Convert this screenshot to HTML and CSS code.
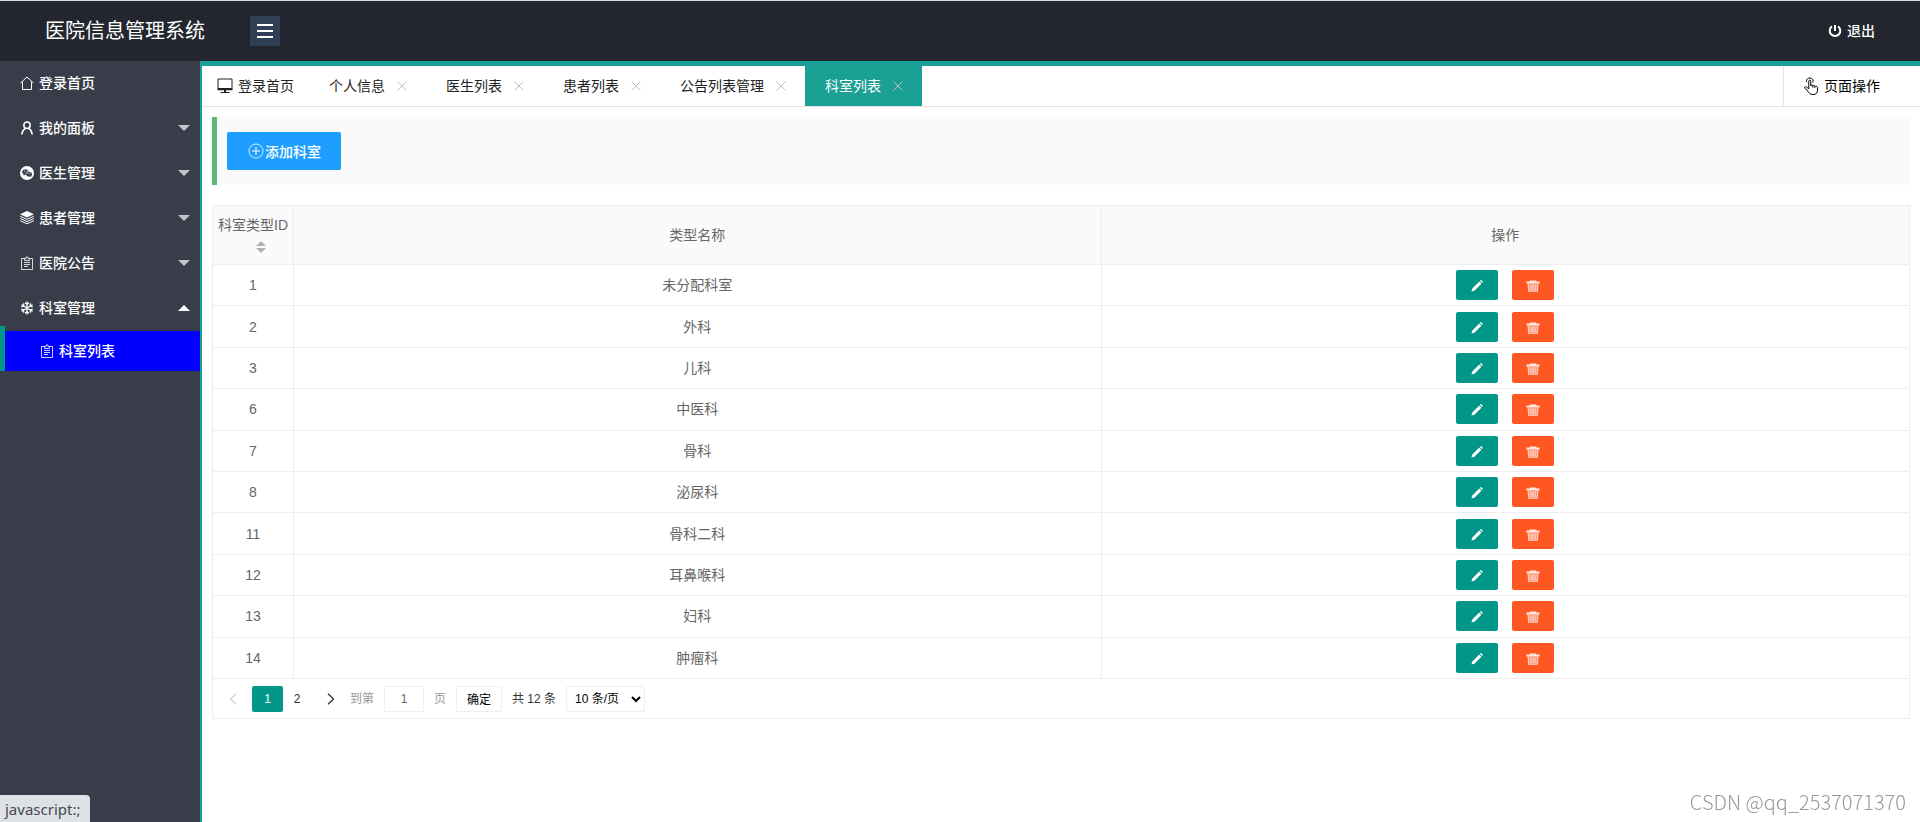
FILE: index.html
```html
<!DOCTYPE html>
<html lang="zh-CN">
<head>
<meta charset="utf-8">
<title>医院信息管理系统</title>
<link rel="stylesheet" href="styles.css">
</head>
<body>
<svg class="sprite" aria-hidden="true">
  <symbol id="i-close" viewBox="0 0 10 10"><path d="M.5.5l9 9M9.500.5l-9 9" fill="none" stroke="currentColor"/></symbol>
  <symbol id="i-note" viewBox="0 0 14 14"><path d="M4.500 2.500h-3v11h11v-11h-3M4.500 4.500v-2h1.500v-1.500h2v1.500h1.500v2zM4 6.500h6M4 8.500h6M4 10.500h4" fill="none" stroke="currentColor" stroke-width=".8"/></symbol>
  <symbol id="i-edit" viewBox="0 0 12 12"><path d="M.4 11.600l.9-3L8.300 1.600l2.100 2.100-7 7zM8.900 1l.4-.4c.5-.5.900-.5 1.400 0l.7.7c.5.500.5.900 0 1.400l-.4.400z" fill="currentColor"/></symbol>
  <symbol id="i-trash" viewBox="0 0 14 12"><path d="M4 .4h6l.5 1H13.600v2.100H.4V1.400h3.100z" fill="currentColor" opacity=".85"/><path d="M1.600 3.500h10.800l-.7 8.100H2.300z" fill="currentColor" opacity=".4"/><path d="M2.200 3.500l.3 7.800h9l.3-7.800M4.900 4.500v5.500M7 4.500v5.500M9.100 4.500v5.500" fill="none" stroke="currentColor" stroke-width=".8" opacity=".8"/></symbol>
</svg>

<header class="header">
  <h1 class="logo">医院信息管理系统</h1>
  <button class="toggle" type="button" aria-label="切换菜单">
    <svg width="18" height="16" viewBox="0 0 18 16"><path d="M1 2h16M1 8h16M1 14h16" stroke="#fff" stroke-width="2"/></svg>
  </button>
  <a class="logout" href="#">
    <svg width="14" height="14" viewBox="0 0 14 14"><path d="M4 2.400a5.300 5.300 0 1 0 6 0M7 1v6" fill="none" stroke="currentColor" stroke-width="2"/></svg>
    <span>退出</span>
  </a>
</header>

<div class="shell">
  <nav class="side">
    <a class="nav" href="#"><svg class="ico" viewBox="0 0 14 14"><path d="M.5 7L7 1l6.500 6M2.500 5.500v8h9v-8" fill="none" stroke="currentColor"/></svg><span>登录首页</span></a>
    <a class="nav" href="#"><svg class="ico" viewBox="0 0 14 14"><circle cx="7" cy="4.200" r="3.200" fill="none" stroke="currentColor" stroke-width="1.500"/><path d="M1.800 13.500c.2-3 1.600-5 3.500-6.200M12.200 13.500c-.2-3-1.600-5-3.500-6.200" fill="none" stroke="currentColor" stroke-width="1.500"/></svg><span>我的面板</span><i class="caret"></i></a>
    <a class="nav" href="#"><svg class="ico" viewBox="0 0 14 14"><circle cx="7" cy="7" r="7" fill="#fff"/><path d="M2.200 6C2.200 4.200 3.800 3.200 5.500 3.200S8.600 4.200 8.800 5.500C6.800 5.600 5.400 6.900 5.700 8.700L3.300 9.400l.3-1.200C2.700 7.700 2.200 7 2.200 6z" fill="#393d49"/><ellipse cx="9.100" cy="8.200" rx="2.900" ry="2.300" fill="#393d49"/><path d="M9.500 10l1.700 1-.2-1.500z" fill="#393d49"/><path d="M4 5h1M6.500 5h1M7.700 7.700h.8M9.800 7.700h.8" stroke="#fff" stroke-width=".8"/></svg><span>医生管理</span><i class="caret"></i></a>
    <a class="nav" href="#"><svg class="ico" viewBox="0 0 14 14"><path d="M7 0l7 3.300-7 3.200L0 3.300z" fill="currentColor"/><path d="M.2 5.300L7 8.400l6.800-3.100M.2 7.500L7 10.600l6.800-3.100M.2 9.700L7 12.800l6.800-3.100" fill="none" stroke="currentColor"/></svg><span>患者管理</span><i class="caret"></i></a>
    <a class="nav" href="#"><svg class="ico"><use href="#i-note"/></svg><span>医院公告</span><i class="caret"></i></a>
    <a class="nav" href="#"><svg class="ico" viewBox="0 0 14 14"><path d="M7 .5v13M1.400 3.800l11.200 6.400M1.400 10.200l11.200-6.400M5 1.800l2 1.700 2-1.700M5 12.200l2-1.700 2 1.700M1.300 6l2.600-.9-.5-2.700M12.700 6l-2.600-.9.5-2.700M1.300 8l2.600.9-.5 2.700M12.700 8l-2.600.9.500 2.700" fill="none" stroke="currentColor" stroke-width="1.300"/></svg><span>科室管理</span><i class="caret up"></i></a>
    <a class="nav sub" href="#"><svg class="ico"><use href="#i-note"/></svg><span>科室列表</span></a>
  </nav>

  <main class="main">
    <div class="tabs">
      <a class="tab home" href="#"><svg width="16" height="16" viewBox="0 0 16 16"><path d="M1 1h14v9.500H1z" fill="none" stroke="currentColor" stroke-linejoin="round"/><path d="M.5 10h15v2.200H.5zM7 12h2v2H7z" fill="currentColor"/><path d="M3.500 14.500h9" stroke="currentColor"/></svg><span>登录首页</span></a>
      <a class="tab" href="#"><span>个人信息</span><svg class="x"><use href="#i-close"/></svg></a>
      <a class="tab" href="#"><span>医生列表</span><svg class="x"><use href="#i-close"/></svg></a>
      <a class="tab" href="#"><span>患者列表</span><svg class="x"><use href="#i-close"/></svg></a>
      <a class="tab" href="#"><span>公告列表管理</span><svg class="x"><use href="#i-close"/></svg></a>
      <a class="tab on" href="#"><span>科室列表</span><svg class="x"><use href="#i-close"/></svg></a>
      <a class="ops" href="#"><svg width="15" height="18" viewBox="0 0 15 18"><path d="M4.800 11.800V4.200c0-1.500 2-1.500 2 0v4.600M6.800 8.500c.2-1 2-.9 2 .2v1.900M8.800 9c.3-.9 2-.8 2 .4v1.400M10.800 9.800c.4-.8 2.700-.6 2.700.7v2.500c0 2.800-1.200 4.500-4.500 4.500-3 0-3.800-1.300-5-3.200L1 11.400c-1-1.500.7-2.300 1.800-1.100l2 1.600" fill="none" stroke="currentColor"/><path d="M2.800 5.300C1.800 3.200 3.300 1 5.800 1s4 2.200 3 4.300" fill="none" stroke="currentColor"/></svg><span>页面操作</span></a>
    </div>

    <div class="content">
      <div class="toolbar">
        <button class="add" type="button"><svg width="16" height="16" viewBox="0 0 16 16"><circle cx="8" cy="8" r="7" fill="none" stroke="currentColor" stroke-width=".8"/><path d="M8 4v8M4 8h8" stroke="currentColor"/></svg><span>添加科室</span></button>
      </div>

      <div class="grid">
        <table class="table">
          <colgroup><col class="c-id"><col><col></colgroup>
          <thead>
            <tr><th scope="col">科室类型ID<span class="sort"><i class="asc"></i><i class="desc"></i></span></th><th scope="col">类型名称</th><th scope="col">操作</th></tr>
          </thead>
          <tbody>
            <tr><td>1</td><td>未分配科室</td><td><div class="acts"><button class="btn" type="button" aria-label="编辑"><svg width="12" height="12"><use href="#i-edit"/></svg></button><button class="btn del" type="button" aria-label="删除"><svg width="14" height="12"><use href="#i-trash"/></svg></button></div></td></tr>
            <tr><td>2</td><td>外科</td><td><div class="acts"><button class="btn" type="button" aria-label="编辑"><svg width="12" height="12"><use href="#i-edit"/></svg></button><button class="btn del" type="button" aria-label="删除"><svg width="14" height="12"><use href="#i-trash"/></svg></button></div></td></tr>
            <tr><td>3</td><td>儿科</td><td><div class="acts"><button class="btn" type="button" aria-label="编辑"><svg width="12" height="12"><use href="#i-edit"/></svg></button><button class="btn del" type="button" aria-label="删除"><svg width="14" height="12"><use href="#i-trash"/></svg></button></div></td></tr>
            <tr><td>6</td><td>中医科</td><td><div class="acts"><button class="btn" type="button" aria-label="编辑"><svg width="12" height="12"><use href="#i-edit"/></svg></button><button class="btn del" type="button" aria-label="删除"><svg width="14" height="12"><use href="#i-trash"/></svg></button></div></td></tr>
            <tr><td>7</td><td>骨科</td><td><div class="acts"><button class="btn" type="button" aria-label="编辑"><svg width="12" height="12"><use href="#i-edit"/></svg></button><button class="btn del" type="button" aria-label="删除"><svg width="14" height="12"><use href="#i-trash"/></svg></button></div></td></tr>
            <tr><td>8</td><td>泌尿科</td><td><div class="acts"><button class="btn" type="button" aria-label="编辑"><svg width="12" height="12"><use href="#i-edit"/></svg></button><button class="btn del" type="button" aria-label="删除"><svg width="14" height="12"><use href="#i-trash"/></svg></button></div></td></tr>
            <tr><td>11</td><td>骨科二科</td><td><div class="acts"><button class="btn" type="button" aria-label="编辑"><svg width="12" height="12"><use href="#i-edit"/></svg></button><button class="btn del" type="button" aria-label="删除"><svg width="14" height="12"><use href="#i-trash"/></svg></button></div></td></tr>
            <tr><td>12</td><td>耳鼻喉科</td><td><div class="acts"><button class="btn" type="button" aria-label="编辑"><svg width="12" height="12"><use href="#i-edit"/></svg></button><button class="btn del" type="button" aria-label="删除"><svg width="14" height="12"><use href="#i-trash"/></svg></button></div></td></tr>
            <tr><td>13</td><td>妇科</td><td><div class="acts"><button class="btn" type="button" aria-label="编辑"><svg width="12" height="12"><use href="#i-edit"/></svg></button><button class="btn del" type="button" aria-label="删除"><svg width="14" height="12"><use href="#i-trash"/></svg></button></div></td></tr>
            <tr><td>14</td><td>肿瘤科</td><td><div class="acts"><button class="btn" type="button" aria-label="编辑"><svg width="12" height="12"><use href="#i-edit"/></svg></button><button class="btn del" type="button" aria-label="删除"><svg width="14" height="12"><use href="#i-trash"/></svg></button></div></td></tr>
          </tbody>
        </table>

        <div class="pager">
          <button class="pg prev" type="button" aria-label="上一页" disabled><svg width="8" height="12" viewBox="0 0 8 12"><path d="M7 .7L1.500 6 7 11.300" fill="none" stroke="currentColor" stroke-width="1.300"/></svg></button>
          <button class="pg cur" type="button">1</button>
          <button class="pg two" type="button">2</button>
          <button class="pg next" type="button" aria-label="下一页"><svg width="8" height="12" viewBox="0 0 8 12"><path d="M1 .7L6.500 6 1 11.300" fill="none" stroke="currentColor" stroke-width="1.300"/></svg></button>
          <label class="skip">到第<input class="num" type="text" value="1">页</label>
          <button class="ok" type="button">确定</button>
          <span class="total">共 12 条</span>
          <select class="size" aria-label="每页条数"><option>10 条/页</option><option>20 条/页</option></select>
        </div>
      </div>
    </div>
  </main>
</div>

<div class="status">javascript:;</div>
<div class="mark">CSDN @qq_2537071370</div>
</body>
</html>
```
FILE: styles.css
```css
* { box-sizing: border-box; }
body {
  margin: 0;
  min-height: 100vh;
  display: flex;
  flex-direction: column;
  border-top: 1px solid #d5dddb;
  background: #fff;
  color: #333;
  font: 14px/24px "Liberation Sans", "Noto Sans CJK SC", sans-serif;
}
a { color: inherit; text-decoration: none; }
button, input, select { font-family: inherit; margin: 0; }
svg { flex: none; display: block; }
.sprite { display: none; }

.header {
  display: flex;
  align-items: center;
  height: 60px;
  padding: 0 45px;
  background: #23262e;
  color: #fff;
}
.logo { margin: 0; font-size: 20px; font-weight: 400; line-height: 28px; }
.toggle {
  display: flex;
  align-items: center;
  justify-content: center;
  width: 30px;
  height: 30px;
  margin-left: 45px;
  padding: 0;
  border: 0;
  background: #2f4056;
}
.logout { display: flex; align-items: center; gap: 5px; margin-left: auto; font-weight: 500; }

.shell { flex: 1; display: flex; }
.side { width: 200px; flex: none; background: #393d49; color: #fff; font-weight: 500; }
.nav {
  position: relative;
  display: flex;
  align-items: center;
  gap: 5px;
  height: 45px;
  padding: 0 10px 2px 20px;
}
.ico { width: 14px; height: 14px; }
.caret {
  margin-left: auto;
  border: 6px solid transparent;
  border-top-color: #c2c5c9;
  border-bottom-width: 0;
}
.caret.up { border-width: 0 6px 6px; border-bottom-color: #fff; }
.sub { height: 40px; padding: 0 10px 0 40px; background: #00f; }
.sub::before {
  content: "";
  position: absolute;
  left: 0;
  bottom: 0;
  width: 5px;
  height: 45px;
  background: #009688;
}

.main {
  flex: 1;
  min-width: 0;
  border-top: 5px solid #1aa094;
  border-left: 2px solid #1aa094;
}
.tabs { display: flex; height: 41px; border-bottom: 1px solid #e2e2e2; color: #222; }
.tab { display: flex; align-items: center; gap: 12px; padding: 0 19px 0 20px; }
.home { gap: 5px; padding: 0 15px; }
.x { width: 10px; height: 10px; color: #c2c2c2; }
.on { background: #1aa094; color: #fff; }
.ops {
  display: flex;
  align-items: center;
  gap: 5px;
  margin-left: auto;
  padding: 0 40px 0 20px;
  border-left: 1px solid #e2e2e2;
  color: #000;
}

.content { padding: 10px; }
.toolbar {
  padding: 15px 10px;
  border-left: 5px solid #5fb878;
  border-radius: 0 2px 2px 0;
  background: #fafafa;
}
.add {
  display: flex;
  align-items: center;
  gap: 1px;
  height: 38px;
  padding: 0 20px 0 21px;
  border: 0;
  border-radius: 2px;
  background: #1e9fff;
  color: #fff;
  font-size: 14px;
  font-weight: 500;
}
.grid { margin-top: 20px; border: 1px solid #eee; }
.table {
  width: 100%;
  height: 473px;
  border-collapse: separate;
  border-spacing: 0;
  table-layout: fixed;
  color: #666;
  text-align: center;
}
.c-id { width: 81px; }
.table th, .table td { padding: 0; border-right: 1px solid #eee; border-bottom: 1px solid #eee; }
.table th:last-child, .table td:last-child { border-right: 0; }
.table th { height: 59px; background: #fafafa; font-weight: 400; }
.sort { display: flex; flex-direction: column; gap: 2px; width: 10px; margin: 4px auto 4px 43px; }
.asc, .desc { border: 5px solid transparent; }
.asc { border-top: 0; border-bottom-color: #b2b2b2; }
.desc { border-bottom: 0; border-top-color: #b2b2b2; }
.acts { display: flex; justify-content: center; gap: 14px; }
.btn {
  display: flex;
  align-items: center;
  justify-content: center;
  width: 42px;
  height: 30px;
  padding: 2px 0 0;
  border: 0;
  border-radius: 2px;
  background: #009688;
  color: #fff;
}
.del { background: #ff5722; }

.pager {
  display: flex;
  align-items: center;
  height: 39px;
  padding-left: 8px;
  font-size: 12px;
  color: #333;
}
.pg {
  display: flex;
  align-items: center;
  justify-content: center;
  width: 31px;
  height: 26px;
  padding: 0;
  border: 0;
  border-radius: 2px;
  background: none;
  color: #333;
  font-size: 12px;
}
.prev { padding-right: 8px; color: #d2d2d2; }
.cur { background: #009688; color: #fff; }
.two { width: 28px; }
.next { width: 39px; }
.skip { display: flex; align-items: center; gap: 10px; color: #999; }
.num, .ok, .size {
  height: 26px;
  border: 1px solid #eee;
  border-radius: 2px;
  background: #fff;
  font-size: 12px;
}
.num { width: 40px; padding: 0; text-align: center; color: #666; }
.ok { width: 46px; margin-left: 10px; padding: 0; color: #000; }
.total { margin: 0 10px; }
.size { width: 79px; padding: 0 4px; color: #000; }

.status {
  position: fixed;
  left: 0;
  bottom: 0;
  width: 90px;
  height: 27px;
  padding: 0 5px;
  border-radius: 0 4px 0 0;
  background: #dee1e6;
  color: #45484d;
  font: 15px/28px "Noto Sans", sans-serif;
}
.mark {
  position: fixed;
  right: 14px;
  bottom: 8px;
  color: #999;
  font: 300 20px/24px "Noto Sans CJK SC", sans-serif;
}
```
